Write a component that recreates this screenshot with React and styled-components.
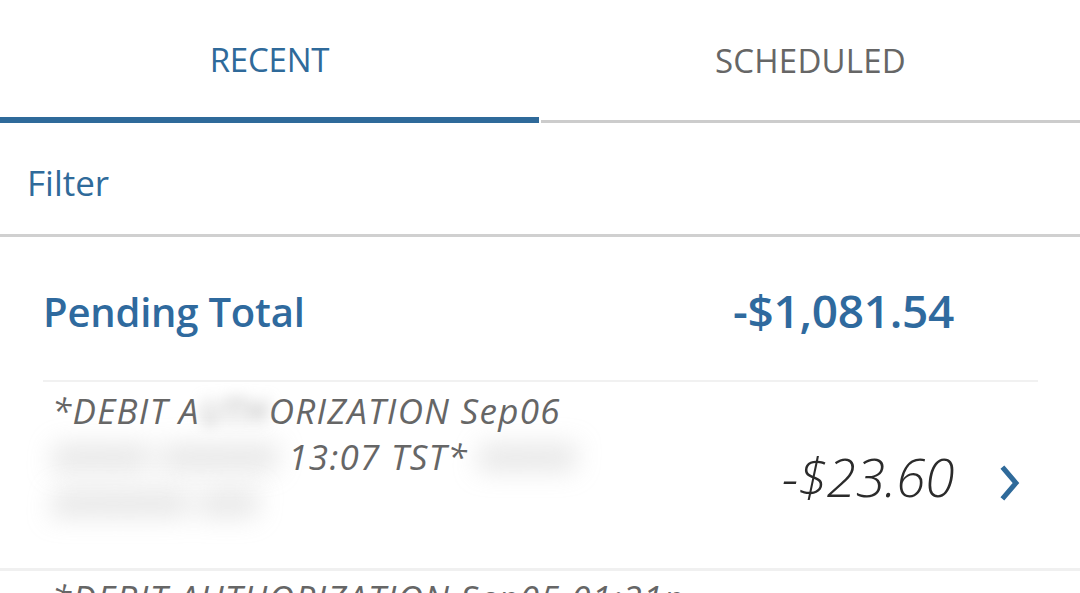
import React from 'react';
import styled, { createGlobalStyle } from 'styled-components';

const GlobalStyle = createGlobalStyle`
  html, body {
    margin: 0;
    padding: 0;
    background: #ffffff;
    font-family: "Open Sans", "Liberation Sans", sans-serif;
    overflow: hidden;
  }
`;

const Screen = styled.div`
  width: 1080px;
  height: 593px;
  overflow: hidden;
  background: #fff;
`;

const Tabs = styled.div`
  display: flex;
  height: 123px;
`;

const Tab = styled.div`
  flex: 1;
  display: flex;
  align-items: center;
  justify-content: center;
  box-sizing: border-box;
  padding-top: ${p => (p.active ? '2px' : '0')};
  border-bottom: ${p => (p.active ? '6px solid #2f6a9a' : '3px solid #cccccc')};
  margin-left: ${p => (p.active ? '0' : '2px')};
  color: ${p => (p.active ? '#2f6a9a' : '#666666')};
  font-size: 33px;
  letter-spacing: ${p => (p.active ? '-0.2px' : '0.2px')};
`;

const FilterBar = styled.div`
  height: 114px;
  display: flex;
  align-items: center;
  padding: 8px 0 0 27px;
  box-sizing: border-box;
  border-bottom: 3px solid #d0d0d0;
  color: #2f6a9a;
  font-size: 35px;
`;

const PendingRow = styled.div`
  display: grid;
  grid-template-columns: 1fr auto 84px;
  align-items: center;
  height: 145px;
  margin: 0 42px 0 43px;
  border-bottom: 2px solid #f1f1f1;
  box-sizing: border-box;
  color: #2f6a9e;
  font-weight: 600;
`;

const PendingLabel = styled.div`
  font-size: 40px;
  letter-spacing: -0.2px;
  padding-top: 6px;
`;

const PendingAmount = styled.div`
  font-size: 46px;
  letter-spacing: -0.3px;
  padding-top: 2px;
`;

const TxRow = styled.div`
  display: grid;
  grid-template-columns: 1fr auto 84px;
  align-items: center;
  height: ${p => p.h}px;
  padding: 0 42px 0 52px;
  border-bottom: 3px solid #f0f0f0;
  box-sizing: border-box;
`;

const TxText = styled.div`
  align-self: start;
  padding-top: ${p => p.top}px;
  color: #666666;
  font-style: italic;
  font-size: 35px;
  line-height: 46px;
  letter-spacing: 1.3px;
  white-space: nowrap;
`;

const Blur = styled.span`
  color: #a8a8a8;
  filter: blur(${p => p.r || 13}px);
`;

const TxAmount = styled.div`
  color: #2b2b2b;
  font-style: italic;
  font-size: 53px;
  font-weight: 300;
  letter-spacing: -0.3px;
  padding-top: 2px;
`;

const Chevron = styled.div`
  display: flex;
  justify-content: flex-end;
  padding: 16px 16px 0 0;
  color: #2f6a9a;
`;

function ChevronIcon() {
  return (
    <svg width="22" height="36" viewBox="0 0 22 36">
      <path d="M4 4 L16 18 L4 32" fill="none" stroke="currentColor" strokeWidth="5" strokeLinecap="square" />
    </svg>
  );
}

export default function App() {
  return (
    <Screen>
      <GlobalStyle />
      <Tabs>
        <Tab active>RECENT</Tab>
        <Tab>SCHEDULED</Tab>
      </Tabs>
      <FilterBar>Filter</FilterBar>
      <PendingRow>
        <PendingLabel>Pending Total</PendingLabel>
        <PendingAmount>-$1,081.54</PendingAmount>
        <span />
      </PendingRow>
      <TxRow h={189}>
        <TxText top={6}>
          <div>*DEBIT A<Blur r={7}>UTH</Blur>ORIZATION Sep06</div>
          <div>
            <Blur>XXXXX XXXXXX</Blur> 13:07 TST* <Blur>XXXXX</Blur>
          </div>
          <div>
            <Blur>XXXXXXX XXX</Blur>
          </div>
        </TxText>
        <TxAmount>-$23.60</TxAmount>
        <Chevron>
          <ChevronIcon />
        </Chevron>
      </TxRow>
      <TxRow h={120}>
        <TxText top={4}>
          <div>*DEBIT AUTHORIZATION Sep05 01:21p</div>
        </TxText>
        <span />
        <span />
      </TxRow>
    </Screen>
  );
}
